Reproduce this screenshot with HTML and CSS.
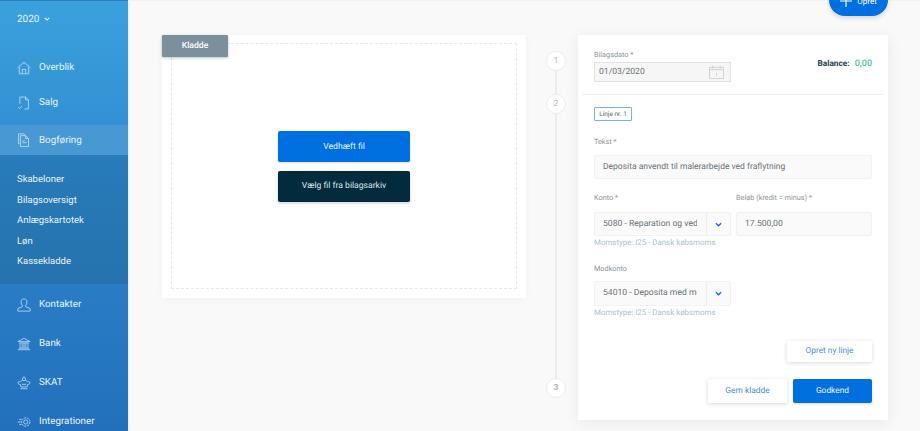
FILE: index.html
```html
<!DOCTYPE html>
<html lang="da">
<head>
<meta charset="utf-8">
<title>Kladde</title>
<link rel="stylesheet" href="styles.css">
</head>
<body>
<div class="app">
  <aside class="sidebar">
    <div class="year">2020 <svg class="caret" viewBox="0 0 8 5" width="6" height="4"><path d="M1 1l3 3 3-3" fill="none" stroke="currentColor" stroke-width="1.4"/></svg></div>
    <nav class="nav nav-top">
      <a class="nav-item"><svg class="ico" viewBox="0 0 16 16"><path d="M.8 7.6L8 1.4l7.2 6.2M2.6 6.6v8h10.800v-8M6 14.600v-5h4v5"/></svg>Overblik</a>
      <a class="nav-item"><svg class="ico" viewBox="0 0 16 16"><path d="M3.300 9V1.200h6.500l3.200 3.200v10.400H8.500M9.800 1.200v3.200H13M1.500 12.800l1.500 1.600 2.600-2.800"/></svg>Salg</a>
      <a class="nav-item active"><svg class="ico" viewBox="0 0 16 16"><path d="M3 12.300H1.800V1h6.400l1.500 1.500M4 3h5.800l3.400 3.400v9H4zM9.800 3v3.400h3.400M6 9h3M6 11h5"/></svg>Bogføring</a>
    </nav>
    <div class="subnav">
      <a>Skabeloner</a>
      <a>Bilagsoversigt</a>
      <a>Anlægskartotek</a>
      <a>Løn</a>
      <a>Kassekladde</a>
    </div>
    <nav class="nav nav-bottom">
      <a class="nav-item"><svg class="ico" viewBox="0 0 16 16"><path d="M8 1c-2.200 0-3.400 1.600-3.400 3.500 0 1.700.7 3 1.500 3.900v1.500L1 12v3h14v-3l-5.100-2.100V8.400c.8-.9 1.500-2.200 1.500-3.900C11.400 2.600 10.200 1 8 1z"/></svg>Kontakter</a>
      <a class="nav-item"><svg class="ico" viewBox="0 0 16 16"><path d="M1 5.300L8 1.500l7 3.800zM2.500 6.800h11M3.500 7v5.500M6 7v5.500M8 7v5.500M10 7v5.500M12.500 7v5.500M2.200 12.800h11.600M1 14.500h14"/></svg>Bank</a>
      <a class="nav-item"><svg class="ico" viewBox="0 0 16 16"><path d="M4 14.500h8M4.500 12.500h7l.8-3c1.800.3 2.700-.9 2.500-2-.2-1.200-1.600-1.700-2.800-1-.5-1.200-1.700-1.600-2.500-1.300M4.500 12.500l-.8-3c-1.800.3-2.700-.9-2.500-2 .2-1.200 1.600-1.700 2.800-1 .5-1.200 1.700-1.600 2.500-1.300"/><circle cx="8" cy="3.500" r="1.800"/><path d="M8 1v-.5M5.500 9.500h5"/></svg>SKAT</a>
      <a class="nav-item"><svg class="ico" viewBox="0 0 16 16"><circle cx="10" cy="8" r="4.800" stroke-dasharray="2.500 .8"/><circle cx="10" cy="8" r="2.400"/><path d="M5 5H2.500M4.300 8H.8M5 11H2.500"/></svg>Integrationer</a>
    </nav>
  </aside>

  <main class="main">
    <button class="fab"><svg viewBox="0 0 14 14" width="12" height="12"><path d="M7 0v14M0 7h14" stroke="#fff" stroke-width="1.300"/></svg>Opret</button>

    <section class="upload-card">
      <div class="tag-kladde">Kladde</div>
      <div class="dropzone">
        <button class="btn btn-primary wide">Vedhæft fil</button>
        <button class="btn btn-dark wide">Vælg fil fra bilagsarkiv</button>
      </div>
    </section>

    <div class="steps">
      <span class="step step-1">1</span>
      <span class="step step-2">2</span>
      <span class="step step-3">3</span>
    </div>

    <section class="form-card">
      <div class="head-row">
        <div class="date-field">
          <label class="lbl lbl-date">Bilagsdato *</label>
          <div class="date-input">
            <span>01/03/2020</span>
            <svg viewBox="0 0 16 15" width="15" height="14"><path d="M.5 2.500h15v12H.5zM.5 5h15M4 .5v3.500M12 .5v3.500M8 8.500v3" fill="none" stroke="#cfcfcf"/></svg>
          </div>
        </div>
        <div class="balance"><b>Balance:</b><span>0,00</span></div>
      </div>
      <hr class="divider">
      <div class="body">
        <div class="line-tag">Linje nr. 1</div>
        <label class="lbl lbl-text">Tekst *</label>
        <div class="input input-text">Deposita anvendt til malerarbejde ved fraflytning</div>
        <div class="two-col">
          <div class="col-a">
            <label class="lbl lbl-gap">Konto *</label>
            <div class="select">
              <span class="select-val"><span class="select-clip">5080 - Reparation og vedligeholdelse</span></span>
              <span class="select-btn"><svg viewBox="0 0 8 5" width="7" height="5"><path d="M1 1l3 3 3-3" fill="none" stroke="#0a6fdc" stroke-width="1.500"/></svg></span>
            </div>
            <div class="hint">Momstype: I25 - Dansk købsmoms</div>
          </div>
          <div class="col-b">
            <label class="lbl lbl-gap">Beløb (kredit = minus) *</label>
            <div class="input amount">17.500,00</div>
          </div>
        </div>
        <div class="col-a modkonto">
          <label class="lbl lbl-mod">Modkonto</label>
          <div class="select">
            <span class="select-val"><span class="select-clip">54010 - Deposita med moms</span></span>
            <span class="select-btn"><svg viewBox="0 0 8 5" width="7" height="5"><path d="M1 1l3 3 3-3" fill="none" stroke="#0a6fdc" stroke-width="1.500"/></svg></span>
          </div>
          <div class="hint">Momstype: I25 - Dansk købsmoms</div>
        </div>
        <div class="new-line-row"><button class="btn btn-white new-line">Opret ny linje</button></div>
        <div class="actions">
          <button class="btn btn-white act">Gem kladde</button>
          <button class="btn btn-primary act">Godkend</button>
        </div>
      </div>
    </section>
  </main>
</div>
</body>
</html>
```
FILE: styles.css
```css
* { box-sizing: border-box; }
html, body { margin: 0; height: 431px; overflow: hidden; }
body { font-family: Roboto, "Liberation Sans", sans-serif; background: #f9f9f9; color: #5b6670; text-rendering: geometricPrecision; }

.app { display: flex; height: 431px; width: 920px; overflow: hidden; }

/* sidebar */
.sidebar {
  width: 128px; flex: none; height: 431px; overflow: hidden; color: #e8f3fb;
  background: linear-gradient(180deg, #3ba1de 0%, #2a7fc6 60%, #2270bc 100%);
  border-top: 1px solid #2a7fb8;
  box-shadow: 1px 0 2px rgba(0,0,0,.08);
}
.year { font-size: 10px; line-height: 14px; padding: 12px 0 0 17px; height: 44px; }
.caret { margin: 0 0 1px 2px; vertical-align: middle; }
.nav { display: flex; flex-direction: column; }
.nav-item { display: flex; align-items: center; font-size: 9.800px; padding-left: 17px; color: #e8f3fb; }
.ico { width: 14px; height: 14px; margin-right: 8px; flex: none; fill: none; stroke: #c4e2f6; stroke-width: .9; }
.nav-top { padding-top: 5px; }
.nav-top .nav-item { height: 35px; }
.nav-top .nav-item.active { height: 30px; margin-top: 5px; background: #4898d4; }
.subnav {
  display: flex; flex-direction: column; height: 129px; padding-top: 15px;
  background: linear-gradient(180deg, #277cb9 0%, #2672ae 100%);
}
.subnav a { font-size: 9.500px; line-height: 20.500px; padding-left: 17px; color: #e8f3fb; }
.nav-bottom .nav-item { height: 39px; }
.nav-bottom { padding-top: 1px; }

/* main */
.main { position: relative; flex: 1; display: flex; align-items: flex-start; padding: 34px 0 0 34px; border-top: 1px solid #f2f2f2; }
.fab {
  position: absolute; top: -15px; left: 701px; width: 59px; height: 30px; border: 0;
  display: flex; align-items: center; justify-content: center; gap: 5px; padding: 0;
  border-radius: 0 0 16px 16px; background: #006fdf; color: #fff; font: 400 8px Roboto, sans-serif;
  text-rendering: geometricPrecision;
  box-shadow: 0 2px 5px rgba(0,0,0,.15);
}

.upload-card {
  position: relative; width: 364px; height: 263px; padding: 8px 9px 9px; background: #fff;
  box-shadow: 0 2px 8px rgba(0,0,0,.03); flex: none;
}
.tag-kladde {
  position: absolute; left: 0; top: 0; width: 66px; height: 22px; background: #7c8f9d; color: #fff;
  font-size: 8.600px; font-weight: 500; display: flex; align-items: center; justify-content: center;
  border-radius: 1px; box-shadow: 0 1px 3px rgba(0,0,0,.25);
}
.dropzone {
  height: 100%; border: 1px dashed #e8e8e8; display: flex; flex-direction: column; align-items: center;
  padding-top: 87px; gap: 8.500px;
}
.btn { border: 0; font-family: Roboto, sans-serif; padding: 0; border-radius: 2px; text-rendering: geometricPrecision; }
.wide { width: 132px; height: 31px; font-size: 8.600px; }
.btn-primary { background: #006fdf; color: #e6f2ff; box-shadow: 0 1px 3px rgba(0,0,0,.15); }
.btn-dark { background: #022b3e; color: #dfe7ea; box-shadow: 0 1px 3px rgba(0,0,0,.2); }
.btn-white { background: #fff; color: #4a8ee6; box-shadow: 0 1px 4px rgba(0,0,0,.16); }

/* steps */
.steps { position: relative; width: 52px; height: 385px; flex: none; }
.steps::before { content: ""; position: absolute; left: 29px; top: 26px; width: 2px; height: 328px; background: #ececec; }
.step {
  position: absolute; left: 20px; width: 20px; height: 20px; border-radius: 50%; background: #fff;
  border: 1px solid #ececec; font-size: 8.500px; color: #b5b5b5; display: flex; align-items: center; justify-content: center;
}
.step-1 { top: 16px; }
.step-2 { top: 59px; }
.step-3 { top: 343px; font-weight: 700; }

/* form card */
.form-card { width: 310px; height: 385px; flex: none; background: #fff; box-shadow: 0 3px 14px rgba(0,0,0,.07); padding: 0 16px; }
.head-row { display: flex; justify-content: space-between; align-items: flex-start; padding-top: 15px; height: 59px; }
.lbl { display: block; font-size: 7.300px; line-height: 10px; color: #8b939a; }
.lbl-date { margin-bottom: 2px; }
.date-input {
  width: 137px; height: 20px; background: #f6f6f6; border: 1px solid #e3e3e3; display: flex; align-items: center;
  justify-content: space-between; padding: 0 6px 0 4px; font-size: 8.600px; color: #6d7377;
}
.balance { display: flex; gap: 5px; font-size: 9px; padding-top: 9px; }
.balance b { font-weight: 700; font-size: 8.300px; color: #2c4150; }
.balance span { color: #3ecb94; font-weight: 500; }
.divider { margin: 0 -12px; border: 0; border-top: 1px solid #f0f0f0; height: 1px; }
.body { padding-top: 12px; }
.line-tag {
  width: 38px; height: 14px; border: 1px solid #77aef2; border-radius: 1px; font-size: 6.500px; color: #555e66;
  display: flex; align-items: center; justify-content: center;
}
.lbl-text { margin-top: 15.500px; margin-bottom: 8.500px; }
.input {
  height: 24px; background: #fafafa; border: 1px solid #f2f2f2; border-radius: 2px; font-size: 8.600px;
  color: #6a7177; display: flex; align-items: center; padding-left: 8px;
}
.input-text { font-size: 8.500px; }
.two-col { display: flex; gap: 5px; margin-top: 14px; }
.col-a { width: 137px; flex: none; }
.col-b { flex: 1; }
.lbl-gap { margin-bottom: 9px; }
.lbl-mod { margin-bottom: 7px; }
.select { display: flex; height: 24px; background: #fafafa; border: 1px solid #f2f2f2; border-radius: 2px; }
.select-val {
  width: 112px; flex: none; padding: 0 9px 0 8px; font-size: 8.600px; line-height: 22px; color: #6a7177;
  border-right: 1px solid #ededed;
}
.select-clip { display: block; white-space: nowrap; overflow: hidden; }
.select-btn { flex: 1; display: flex; align-items: center; justify-content: center; }
.hint { font-size: 7.900px; line-height: 10px; margin-top: 2px; color: #a9bfcc; }
.amount { padding-left: 8px; }
.modkonto { margin-top: 15.500px; }
.modkonto .select { height: 25px; }
.new-line-row { display: flex; justify-content: flex-end; margin-top: 23px; }
.new-line { width: 85px; height: 21px; font-size: 8.300px; }
.actions { display: flex; justify-content: flex-end; gap: 6px; margin-top: 17px; }
.act { width: 79px; height: 24px; font-size: 8.400px; }
```
